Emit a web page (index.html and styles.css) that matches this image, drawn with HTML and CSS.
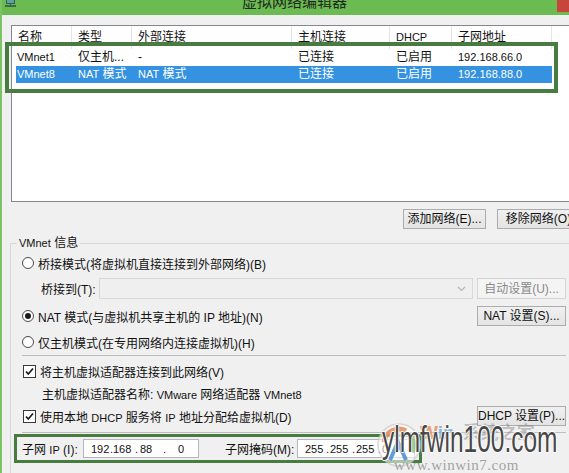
FILE: index.html
```html
<!DOCTYPE html>
<html lang="zh-CN">
<head>
<meta charset="utf-8">
<title>虚拟网络编辑器</title>
<link rel="stylesheet" href="styles.css">
</head>
<body>
<div class="window">
  <div class="titlebar">
    <svg class="app-icon" width="11" height="7" viewBox="0 0 11 7">
      <rect x="1" y="0" width="9" height="4" fill="#2f5f5a"/>
      <rect x="2" y="0" width="7" height="3" fill="#5fa39a"/>
      <rect x="0" y="5" width="11" height="2" fill="#3d6b45"/>
      <rect x="5" y="4" width="1" height="1" fill="#2f5f5a"/>
    </svg>
    <div class="title">虚拟网络编辑器</div>
    <div class="close"></div>
  </div>

  <div class="content">
    <div class="listbox">
      <div class="list-head">
        <div>名称</div><div>类型</div><div>外部连接</div><div>主机连接</div><div class="en">DHCP</div><div>子网地址</div><div></div>
      </div>
      <div class="list-row">
        <div class="en">VMnet1</div><div>仅主机...</div><div>-</div><div>已连接</div><div>已启用</div><div class="en">192.168.66.0</div>
      </div>
      <div class="list-row selected">
        <div class="en">VMnet8</div><div><span class="en">NAT</span> 模式</div><div><span class="en">NAT</span> 模式</div><div>已连接</div><div>已启用</div><div class="en">192.168.88.0</div>
      </div>
    </div>

    <div class="list-actions">
      <button class="btn btn-list">添加网络(E)...</button>
      <button class="btn btn-list">移除网络(O)</button>
    </div>

    <fieldset class="group">
      <legend><span class="en">VMnet</span> 信息</legend>

      <div class="opt-row">
        <span class="radio"></span>
        <span>桥接模式(将虚拟机直接连接到外部网络)(B)</span>
      </div>

      <div class="opt-row bridge-row">
        <span class="bridge-label">桥接到(T):</span>
        <div class="select">
          <svg class="chev" width="9" height="6" viewBox="0 0 9 6"><path d="M1 1 L4.5 4.5 L8 1" fill="none" stroke="#b5b5b5" stroke-width="1.2"/></svg>
        </div>
        <button class="btn btn-side disabled">自动设置(U)...</button>
      </div>

      <div class="opt-row nat-row">
        <span class="radio checked"></span>
        <span>NAT 模式(与虚拟机共享主机的 IP 地址)(N)</span>
        <button class="btn btn-side btn-right">NAT 设置(S)...</button>
      </div>

      <div class="opt-row host-row">
        <span class="radio"></span>
        <span>仅主机模式(在专用网络内连接虚拟机)(H)</span>
      </div>

      <div class="sep sep-1"></div>

      <div class="opt-row chk-row-1">
        <span class="checkbox"><svg width="11" height="11" viewBox="0 0 11 11"><path d="M2 5.5 L4.3 8 L9 2.5" fill="none" stroke="#1a1a1a" stroke-width="1.7"/></svg></span>
        <span>将主机虚拟适配器连接到此网络(V)</span>
      </div>

      <div class="opt-row adapter-row">
        <span>主机虚拟适配器名称: <span class="en">VMware</span> 网络适配器 <span class="en">VMnet8</span></span>
      </div>

      <div class="opt-row chk-row-2">
        <span class="checkbox"><svg width="11" height="11" viewBox="0 0 11 11"><path d="M2 5.5 L4.3 8 L9 2.5" fill="none" stroke="#1a1a1a" stroke-width="1.7"/></svg></span>
        <span>使用本地 <span class="en">DHCP</span> 服务将 <span class="en">IP</span> 地址分配给虚拟机(D)</span>
        <button class="btn btn-side btn-right">DHCP 设置(P)...</button>
      </div>

      <div class="sep sep-2"></div>

      <div class="subnet-box">
        <span class="subnet-label">子网 <span class="en">IP</span> (I):</span>
        <div class="ipbox ip-a">
          <span class="s1">192</span><span class="d1">.</span><span class="s2">168</span><span class="d2">.</span><span class="s3">88</span><span class="d3">.</span><span>0</span>
        </div>
        <span class="mask-label">子网掩码(M):</span>
        <div class="ipbox ip-b">
          <span class="m1">255</span><span class="md">.</span><span class="m2">255</span><span class="md">.</span><span class="m2">255</span><span class="md">.</span><span>0</span>
        </div>
      </div>
    </fieldset>
  </div>

  <div class="annot-list"></div>

  <div class="watermark">
    <svg class="wm-logo" width="46" height="46" viewBox="0 0 46 46">
      <circle cx="23" cy="23" r="21" fill="rgba(255,255,255,0.55)" stroke="rgba(200,200,200,0.7)" stroke-width="1.5"/>
      <path d="M8 20 A15 15 0 0 1 30 9" fill="none" stroke="rgba(230,120,60,0.75)" stroke-width="5"/>
      <path d="M33 12 A15 15 0 0 1 36 30" fill="none" stroke="rgba(120,180,90,0.7)" stroke-width="5"/>
      <path d="M14 38 L22 20 L30 38" fill="none" stroke="rgba(60,130,210,0.8)" stroke-width="4"/>
    </svg>
    <div class="wm-top"><span class="wm-w">W</span><span class="wm-in">in</span><span class="wm-cn">系统之家</span></div>
    <div class="wm-main">ylmfwin100.com</div>
    <div class="wm-sub">www.winwin7.com</div>
  </div>
</div>
</body>
</html>
```

FILE: styles.css
```css
* { box-sizing: border-box; }

html, body {
  margin: 0;
  padding: 0;
}

body {
  width: 569px;
  height: 473px;
  overflow: hidden;
  background: #f0f0f0;
  font-family: "Liberation Sans", "Noto Sans CJK SC", sans-serif;
  font-size: 12px;
  color: #111;
}

.en {
  font-size: 11px;
}

.window {
  position: relative;
  width: 569px;
  height: 473px;
  overflow: hidden;
  border-left: 2px solid #7cc366;
  background: #f0f0f0;
}

/* title bar */
.titlebar {
  height: 15px;
  background: #6cbb52;
  display: flex;
  align-items: flex-start;
  overflow: hidden;
}

.app-icon {
  margin-left: 3px;
  flex: none;
}

.title {
  flex: 1;
  text-align: center;
  font-family: "Noto Sans CJK SC", sans-serif;
  font-size: 15px;
  line-height: 15px;
  margin-top: -7px;
  padding-left: 16px;
  color: #1e2a1e;
}

.close {
  width: 12px;
  height: 12px;
  background: #c8453b;
  flex: none;
}

/* main */
.content {
  padding: 10px 0 0 9px;
}

.listbox {
  width: 600px;
  height: 177px;
  border: 1px solid #828790;
  background: #fff;
}

.list-head {
  display: grid;
  grid-template-columns: 60px 60px 160px 98px 62px 100px 60px;
  height: 23px;
}

.list-head > div {
  border-right: 1px solid #e5e5e5;
  padding-left: 6px;
  line-height: 23px;
  white-space: nowrap;
}

.list-row {
  display: grid;
  grid-template-columns: 56px 60px 160px 98px 62px 100px;
  margin-left: 4px;
  width: 536px;
  height: 17px;
}

.list-row > div {
  padding-left: 6px;
  line-height: 17px;
  white-space: nowrap;
  overflow: hidden;
}

.list-row > div:first-child {
  padding-left: 1px;
}

.list-row.selected {
  background: #3592e0;
  color: #fff;
}

.annot-list {
  position: absolute;
  left: 3px;
  top: 42px;
  width: 553px;
  height: 51px;
  border: 4px solid #477b3f;
}

/* buttons */
.btn {
  height: 20px;
  padding: 0;
  border: 1px solid #acacac;
  background: linear-gradient(#f0f0f0, #e4e4e4);
  font-family: "Liberation Sans", "Noto Sans CJK SC", sans-serif;
  font-size: 12px;
  line-height: 18px;
  color: #111;
  text-align: center;
  white-space: nowrap;
  flex: none;
}

.btn.disabled {
  background: #f4f4f4;
  border-color: #d5d5d5;
  color: #8a8a8a;
}

.list-actions {
  display: flex;
  gap: 11px;
  margin-top: 7px;
  padding-left: 392px;
}

.btn-list {
  width: 83px;
}

.btn-side {
  width: 89px;
}

.btn-right {
  margin-left: auto;
}

/* group */
.group {
  margin: 7px 0 0 -1px;
  width: 570px;
  height: 260px;
  padding: 3px 13px 0 11px;
  border: 1px solid #d8d8d8;
}

.group legend {
  margin-left: -5px;
  padding: 0 2px;
  font-size: 12px;
  line-height: 14px;
  color: #111;
}

.opt-row {
  display: flex;
  align-items: center;
  height: 20px;
  white-space: nowrap;
}

.radio {
  width: 12px;
  height: 12px;
  border-radius: 50%;
  border: 1px solid #4a4a4a;
  background: #fff;
  margin-right: 4px;
  display: flex;
  align-items: center;
  justify-content: center;
  flex: none;
}

.radio.checked::after {
  content: "";
  width: 6px;
  height: 6px;
  border-radius: 50%;
  background: #1a1a1a;
}

.bridge-row {
  height: 21px;
  margin-top: 5px;
}

.bridge-label {
  width: 58px;
  margin-left: 19px;
  flex: none;
}

.select {
  flex: 1;
  height: 21px;
  border: 1px solid #d9d9d9;
  background: #efefef;
  margin-right: 4px;
  display: flex;
  align-items: center;
  justify-content: flex-end;
  padding-right: 6px;
}

.bridge-row .btn {
  height: 21px;
}

.nat-row {
  margin-top: 7px;
}

.host-row {
  margin-top: 6px;
}

.sep {
  height: 1px;
  background: #bdbdbd;
}

.sep-1 {
  margin-top: 3px;
}

.chk-row-1 {
  margin-top: 5px;
}

.checkbox {
  width: 13px;
  height: 13px;
  border: 1px solid #3a3a3a;
  background: #fff;
  margin: 0 4px 0 1px;
  display: flex;
  align-items: center;
  justify-content: center;
  flex: none;
}

.adapter-row {
  margin-top: 2px;
  padding-left: 20px;
}

.chk-row-2 {
  margin-top: 3px;
}

.sep-2 {
  margin-top: 6px;
}

.subnet-box {
  margin: 1px 0 0 -8px;
  width: 408px;
  height: 29px;
  border: 3px solid #477b3f;
  display: flex;
  align-items: center;
  padding-left: 5px;
  white-space: nowrap;
}

.subnet-label {
  width: 61px;
  flex: none;
}

.mask-label {
  width: 72px;
  margin-left: 26px;
  flex: none;
}

.ipbox {
  height: 19px;
  border: 1px solid #b3b6bd;
  background: #fff;
  display: flex;
  align-items: center;
  padding-left: 7px;
  flex: none;
  font-size: 11px;
}

.ip-a { width: 116px; }
.ip-b { width: 118px; }

.ipbox span { display: inline-block; }
.ip-a .s1 { width: 19px; }
.ip-a .d1 { width: 3px; }
.ip-a .s2 { width: 22px; }
.ip-a .d2 { width: 5px; }
.ip-a .s3 { width: 23px; }
.ip-a .d3 { width: 15px; }
.ip-b .m1 { width: 21px; }
.ip-b .md { width: 4px; }
.ip-b .m2 { width: 22px; }

/* watermark overlay */
.watermark {
  position: absolute;
  left: 370px;
  top: 418px;
  width: 199px;
  height: 55px;
  pointer-events: none;
}

.wm-logo {
  position: absolute;
  left: 4px;
  top: 4px;
}

.wm-top {
  position: absolute;
  left: 48px;
  top: 2px;
  font-family: "Liberation Sans", sans-serif;
  font-weight: bold;
  font-size: 19px;
  line-height: 22px;
  white-space: nowrap;
}

.wm-w { color: rgba(230, 130, 70, 0.75); }
.wm-in { color: rgba(110, 160, 205, 0.75); margin-right: 8px; }
.wm-cn {
  font-family: "Noto Sans CJK SC", sans-serif;
  font-size: 18px;
  color: rgba(130, 130, 130, 0.45);
}

.wm-main {
  position: absolute;
  left: 10px;
  top: 2px;
  font-family: "Liberation Sans", sans-serif;
  font-size: 36px;
  line-height: 40px;
  color: #484848;
  white-space: nowrap;
  transform: scaleX(0.68);
  transform-origin: left center;
  text-shadow: 1px 0 0 #fff, -1px 0 0 #fff, 0 1px 0 #fff, 0 -1px 0 #fff, 0 0 3px rgba(255,255,255,0.9);
}

.wm-sub {
  position: absolute;
  left: 22px;
  top: 39px;
  font-family: "Liberation Serif", serif;
  font-size: 15px;
  line-height: 16px;
  letter-spacing: 0.5px;
  color: rgba(140, 140, 140, 0.8);
  white-space: nowrap;
}
```
